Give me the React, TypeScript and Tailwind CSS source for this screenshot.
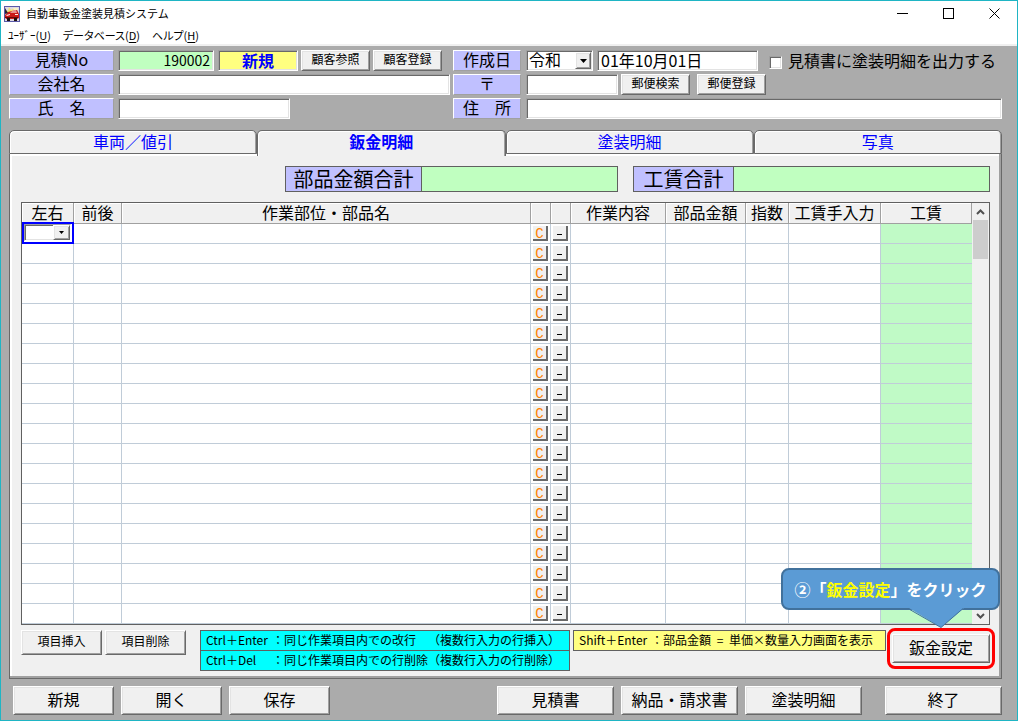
import type { ReactNode } from 'react';
import clsx from 'clsx';

const SUNKEN =
  'border border-t-[#a0a0a0] border-l-[#a0a0a0] border-r-white border-b-white shadow-[inset_1px_1px_#696969,inset_-1px_-1px_#e3e3e3]';
const RAISED =
  'border border-t-white border-l-white border-r-[#696969] border-b-[#696969] shadow-[inset_1px_1px_#e3e3e3,inset_-1px_-1px_#a0a0a0] bg-[#f0f0f0]';

const MENUS = [
  { label: 'ﾕｰｻﾞｰ', accel: 'U' },
  { label: 'データベース', accel: 'D' },
  { label: 'ヘルプ', accel: 'H' },
];

const TABS = ['車両／値引', '鈑金明細', '塗装明細', '写真'];
const ACTIVE_TAB = 1;

const COLUMNS = [
  { title: '左右', width: 'w-[52px]' },
  { title: '前後', width: 'w-[48px]' },
  { title: '作業部位・部品名', width: '' },
  { title: '', width: 'w-[20px]' },
  { title: '', width: 'w-[20px]' },
  { title: '作業内容', width: 'w-[95px]' },
  { title: '部品金額', width: 'w-[80px]' },
  { title: '指数', width: 'w-[43px]' },
  { title: '工賃手入力', width: 'w-[92px]' },
  { title: '工賃', width: 'w-[91px]' },
];

const ROW_COUNT = 20;

function AppIcon() {
  return (
    <svg viewBox="0 0 16 16" className="w-4 h-4" aria-hidden="true">
      <rect x="0.5" y="0.5" width="15" height="15" fill="#dcd8e4" stroke="#5a5aa8" />
      <path d="M1 4l3 1 1-4 2 3 4-2-2 3 2 2H2z" fill="#f2e070" />
      <path d="M9 2h5v2h-4z" fill="#f8f0c8" />
      <path d="M1 9l3-3 4-1 5-1 2 4v4l-2 1H2l-1-2z" fill="#cc1818" />
      <path d="M6 7l2-2 4-1 1 3z" fill="#e89090" />
      <path d="M2 9l4-1v1l-3 1zM11 8h3v1h-3z" fill="#fff0e8" />
      <path d="M1 11h13v1H1z" fill="#6a0808" />
      <rect x="3" y="12" width="3" height="3" fill="#221010" />
      <rect x="10" y="12" width="3" height="3" fill="#221010" />
      <path d="M1 2l3 5-3 1z" fill="#2a2030" />
    </svg>
  );
}

function WindowButton({ label, children }: { label: string; children: ReactNode }) {
  return (
    <button type="button" aria-label={label} className="w-[46px] h-[25px] flex items-center justify-center">
      <svg viewBox="0 0 11 11" className="w-[11px] h-[11px]" fill="none" stroke="#000" shapeRendering="crispEdges">
        {children}
      </svg>
    </button>
  );
}

function TitleBar() {
  return (
    <header className="bg-white border-b-2 border-[#f0f0f0]">
      <div className="flex h-[25px] items-center pl-[3px]">
        <AppIcon />
        <h1 className="flex-1 pb-[2px] pl-[6px] text-[11px] leading-4">自動車鈑金塗装見積システム</h1>
        <WindowButton label="最小化">
          <path d="M0 5.5h11" />
        </WindowButton>
        <WindowButton label="最大化">
          <path d="M0.5 0.5h10v10h-10z" />
        </WindowButton>
        <WindowButton label="閉じる">
          <path d="M0.5 0.5l10 10M10.5 0.5l-10 10" shapeRendering="auto" />
        </WindowButton>
      </div>
      <nav className="flex h-[18px] items-center gap-3 pl-[7px] text-[11px] leading-4 [font-feature-settings:'palt']">
        {MENUS.map((menu) => (
          <button key={menu.accel} type="button">
            {menu.label}(<u className="underline-offset-2">{menu.accel}</u>)
          </button>
        ))}
      </nav>
    </header>
  );
}

function FieldLabel({ htmlFor, className, children }: { htmlFor: string; className: string; children: ReactNode }) {
  return (
    <label
      htmlFor={htmlFor}
      className={clsx(
        'h-[21px] shrink-0 bg-[#c0c0ff] border border-t-white border-l-white border-r-[#a0a0a0] border-b-[#a0a0a0] text-center text-base leading-[17px] whitespace-pre',
        className,
      )}
    >
      {children}
    </label>
  );
}

function TextField({ id, className, value }: { id: string; className: string; value?: string }) {
  return (
    <input
      id={id}
      type="text"
      defaultValue={value}
      className={clsx('h-[21px] min-w-0 px-[3px] pb-[2px] leading-[17px] outline-none', SUNKEN, className)}
    />
  );
}

function PushButton({ className, children }: { className: string; children: ReactNode }) {
  return (
    <button
      type="button"
      className={clsx('shrink-0 flex items-center justify-center pb-[3px] whitespace-nowrap', RAISED, className)}
    >
      {children}
    </button>
  );
}

function EstimateHeader() {
  return (
    <section className="flex gap-[3px]">
      <div className="flex w-[441px] shrink-0 flex-col gap-[3px]">
        <div className="flex">
          <FieldLabel htmlFor="estimate-no" className="w-[105px] mr-1">見積No</FieldLabel>
          <TextField id="estimate-no" className="w-[96px] mr-1 bg-[#c0ffc0] text-right text-sm" value="190002" />
          <output className={clsx('w-[80px] mr-[3px] h-[21px] bg-[#ffff80] text-center text-base leading-[18px] font-bold text-[#0000ff]', SUNKEN)}>
            新規
          </output>
          <PushButton className="h-[21px] w-[69px] mr-[3px] text-xs">顧客参照</PushButton>
          <PushButton className="h-[21px] w-[69px] text-xs">顧客登録</PushButton>
        </div>
        <div className="flex gap-1">
          <FieldLabel htmlFor="company" className="w-[105px]">会社名</FieldLabel>
          <TextField id="company" className="flex-1 bg-white text-base" />
        </div>
        <div className="flex gap-1">
          <FieldLabel htmlFor="person" className="w-[105px]">氏　名</FieldLabel>
          <TextField id="person" className="w-[172px] bg-white text-base" />
        </div>
      </div>
      <div className="flex min-w-0 flex-1 flex-col gap-[3px]">
        <div className="flex h-[21px]">
          <FieldLabel htmlFor="era" className="w-[68px] mr-[5px]">作成日</FieldLabel>
          <div className="relative mr-1 h-[21px] w-[67px] shrink-0">
            <select
              id="era"
              defaultValue="令和"
              className={clsx('block h-[21px] w-full appearance-none bg-white pb-[2px] pl-[2px] text-base leading-[17px] outline-none', SUNKEN)}
            >
              <option>令和</option>
              <option>平成</option>
            </select>
            <span className={clsx('pointer-events-none absolute right-[2px] top-[2px] flex h-[17px] w-4 items-center justify-center', RAISED)}>
              <svg viewBox="0 0 7 4" className="w-[7px] h-1"><path d="M0 0h7L3.5 4z" /></svg>
            </span>
          </div>
          <TextField id="date" className="w-[161px] mr-[11px] bg-white text-base" value="01年10月01日" />
          <label className="flex h-[21px] items-center gap-[6px] text-base leading-[21px] whitespace-nowrap">
            <input type="checkbox" className={clsx('mt-1 h-[13px] w-[13px] shrink-0 appearance-none bg-white', SUNKEN)} />
            見積書に塗装明細を出力する
          </label>
        </div>
        <div className="flex">
          <FieldLabel htmlFor="postal" className="w-[68px] mr-[5px]">〒</FieldLabel>
          <TextField id="postal" className="w-[92px] mr-[3px] bg-white text-base" />
          <PushButton className="h-[21px] w-[69px] mr-[7px] text-xs">郵便検索</PushButton>
          <PushButton className="h-[21px] w-[69px] text-xs">郵便登録</PushButton>
        </div>
        <div className="flex gap-[5px]">
          <FieldLabel htmlFor="address" className="w-[68px]">住　所</FieldLabel>
          <TextField id="address" className="flex-1 bg-white text-base" />
        </div>
      </div>
    </section>
  );
}

function TabStrip() {
  return (
    <div role="tablist" className="grid grid-cols-4">
      {TABS.map((name, i) => (
        <button
          key={name}
          type="button"
          role="tab"
          aria-selected={i === ACTIVE_TAB}
          className={clsx(
            'rounded-t-[5px] border border-[#696969] bg-[#f0f0f0] text-base leading-5 text-[#0000ff]',
            i === ACTIVE_TAB
              ? 'relative z-10 h-[26px] -mb-[2px] border-b-0 pb-[5px] font-bold shadow-[inset_1px_1px_white,inset_-1px_0_#a0a0a0]'
              : 'h-6 pb-[2px] shadow-[inset_1px_1px_white,inset_-1px_0_#a0a0a0]',
          )}
        >
          {name}
        </button>
      ))}
    </div>
  );
}

function Total({ label, className, labelClass }: { label: string; className: string; labelClass: string }) {
  return (
    <div className={clsx('flex h-[26px] border border-[#606060] text-[20px] leading-6', className)}>
      <span className={clsx('shrink-0 border-r border-[#606060] bg-[#c0c0ff] text-center', labelClass)}>{label}</span>
      <output aria-label={label} className="flex-1 bg-[#c0ffc0]" />
    </div>
  );
}

function SideSelect() {
  return (
    <div className="absolute -top-[2px] -bottom-px left-0 -right-px z-10 border-2 border-[#0000ff] bg-white">
      <div className="relative h-[17px] w-[47px]">
        <select aria-label="左右" className={clsx('block h-full w-full appearance-none bg-white text-xs outline-none', SUNKEN)} />
        <span className={clsx('pointer-events-none absolute right-px top-px flex h-[15px] w-[17px] items-center justify-center', RAISED)}>
          <svg viewBox="0 0 5 3" className="w-[5px] h-[3px]"><path d="M0 0h5L2.5 3z" /></svg>
        </span>
      </div>
    </div>
  );
}

function RowButton({ label, className, children }: { label: string; className: string; children: ReactNode }) {
  return (
    <button
      type="button"
      aria-label={label}
      className={clsx(
        'ml-[2px] flex h-[15px] w-[15px] items-center justify-center border-r-2 border-b-2 border-[#696969] bg-[#f0f0f0]',
        className,
      )}
    >
      {children}
    </button>
  );
}

function DetailGrid() {
  return (
    <div className="mt-[10px] flex border border-[#606060] bg-white">
      <table className="flex-1 table-fixed border-separate border-spacing-0">
        <thead>
          <tr>
            {COLUMNS.map((col, i) => (
              <th
                key={i}
                className={clsx(
                  'h-[21px] border-r border-b border-[#a0a0a0] bg-[#f0f0f0] p-0 pb-[3px] text-base leading-4 font-normal whitespace-nowrap shadow-[inset_1px_1px_white]',
                  col.width,
                )}
              >
                {col.title}
              </th>
            ))}
          </tr>
        </thead>
        <tbody>
          {Array.from({ length: ROW_COUNT }, (_, row) => (
            <tr key={row}>
              {COLUMNS.map((_, i) => (
                <td
                  key={i}
                  className={clsx(
                    'relative h-5 border-b border-[#c0ccd8] p-0',
                    i === COLUMNS.length - 1 ? 'bg-[#c0fac6]' : 'border-r',
                  )}
                >
                  {row === 0 && i === 0 && <SideSelect />}
                  {i === 3 && (
                    <RowButton
                      label={`${row + 1}行目 クリア`}
                      className="pt-[2px] font-['Liberation_Mono',monospace] text-sm leading-3 text-[#ff8000]"
                    >
                      C
                    </RowButton>
                  )}
                  {i === 4 && (
                    <RowButton label={`${row + 1}行目 削除`} className="pt-1">
                      <span className="h-px w-[5px] bg-black" />
                    </RowButton>
                  )}
                </td>
              ))}
            </tr>
          ))}
        </tbody>
      </table>
      <div className="flex w-[17px] shrink-0 flex-col bg-[#f0f0f0]">
        <button type="button" aria-label="上へ" className="flex h-[17px] items-center justify-center">
          <svg viewBox="0 0 9 6" className="w-[9px] h-[6px]" fill="none" stroke="#505050" strokeWidth="2"><path d="M1 5l3.5-3.5L8 5" /></svg>
        </button>
        <div className="mx-px h-[39px] bg-[#cdcdcd]" />
        <button type="button" aria-label="下へ" className="mt-auto flex h-[17px] items-center justify-center">
          <svg viewBox="0 0 9 6" className="w-[9px] h-[6px]" fill="none" stroke="#505050" strokeWidth="2"><path d="M1 1l3.5 3.5L8 1" /></svg>
        </button>
      </div>
    </div>
  );
}

function ShortcutRow({ keys, text, note }: { keys: string; text: string; note: string }) {
  return (
    <div className="flex h-5 border-b border-[#606060] pl-[5px]">
      <span className="w-[66px]">{keys}</span>
      <span className="w-3">：</span>
      <span className="w-[144px]">{text}</span>
      <span>{note}</span>
    </div>
  );
}

function SettingsCallout() {
  return (
    <div className="absolute -right-[10px] bottom-[53px] z-20 h-[42px] w-[219px]">
      <div className="h-full rounded-[8px] border-2 border-[#41719c] bg-[#5b9bd5] text-center text-base leading-[38px] font-bold whitespace-nowrap text-white">
        ②「<span className="text-[#ffff00]">鈑金設定</span>」をクリック
      </div>
      <svg viewBox="0 0 56 22" className="absolute left-[127px] top-[39px] w-[56px] h-[22px]">
        <path d="M0 0h56v1L33 20.5 1 1z" fill="#5b9bd5" />
        <path d="M0 1.5L33 20.5 55 1.5" fill="none" stroke="#41719c" />
      </svg>
    </div>
  );
}

function PanelFooter() {
  return (
    <div className="mt-[5px] flex items-start text-xs">
      <PushButton className="h-[25px] w-[81px] mr-[3px]">項目挿入</PushButton>
      <PushButton className="h-[25px] w-[81px] mr-[14px]">項目削除</PushButton>
      <div className="w-[370px] mr-[3px] shrink-0 border border-b-0 border-[#606060] bg-[#00ffff] leading-[18px] whitespace-nowrap">
        <ShortcutRow keys="Ctrl＋Enter" text="同じ作業項目内での改行" note="（複数行入力の行挿入）" />
        <ShortcutRow keys="Ctrl＋Del" text="同じ作業項目内での行削除" note="（複数行入力の行削除）" />
      </div>
      <p className="flex h-[21px] w-[313px] shrink-0 border border-[#606060] bg-[#ffff80] pl-[5px] leading-[18px] whitespace-nowrap">
        <span className="w-[72px]">Shift＋Enter</span>
        <span>：部品金額</span>
        <span className="w-[18px] text-center">=</span>
        <span>単価×数量入力画面を表示</span>
      </p>
      <div className="relative ml-auto mt-1">
        <PushButton className="h-[29px] w-[98px] text-base">鈑金設定</PushButton>
        <div className="pointer-events-none absolute -inset-x-[5px] -inset-y-[6px] rounded-[8px] border-[3px] border-[#ff0000]" />
        <SettingsCallout />
      </div>
    </div>
  );
}

function ActionBar() {
  return (
    <footer className="mt-[7px] flex pl-1 text-base">
      <div className="flex gap-[7px]">
        <PushButton className="h-[29px] w-[101px]">新規</PushButton>
        <PushButton className="h-[29px] w-[101px]">開く</PushButton>
        <PushButton className="h-[29px] w-[101px]">保存</PushButton>
      </div>
      <div className="ml-auto flex gap-[7px]">
        <PushButton className="h-[29px] w-[117px]">見積書</PushButton>
        <PushButton className="h-[29px] w-[117px]">納品・請求書</PushButton>
        <PushButton className="h-[29px] w-[117px]">塗装明細</PushButton>
      </div>
      <PushButton className="ml-[23px] h-[29px] w-[117px]">終了</PushButton>
    </footer>
  );
}

export default function App() {
  return (
    <div
      lang="ja"
      className="min-h-screen border border-[#1fb5c4] bg-[#ababab] text-black font-['Noto_Sans_CJK_JP',sans-serif]"
    >
      <TitleBar />
      <main className="pt-1 pr-[15px] pb-[5px] pl-2">
        <EstimateHeader />
        <div className="mt-[11px]">
          <TabStrip />
          <section className="border border-t-0 border-[#696969] bg-[#f0f0f0] px-[11px] pt-3 pb-[7px] shadow-[inset_-2px_-2px_#a0a0a0,inset_2px_2px_white]">
            <div className="flex justify-end gap-[15px]">
              <Total label="部品金額合計" className="w-[333px]" labelClass="w-[136px]" />
              <Total label="工賃合計" className="w-[357px]" labelClass="w-[100px]" />
            </div>
            <DetailGrid />
            <PanelFooter />
          </section>
        </div>
        <ActionBar />
      </main>
    </div>
  );
}
